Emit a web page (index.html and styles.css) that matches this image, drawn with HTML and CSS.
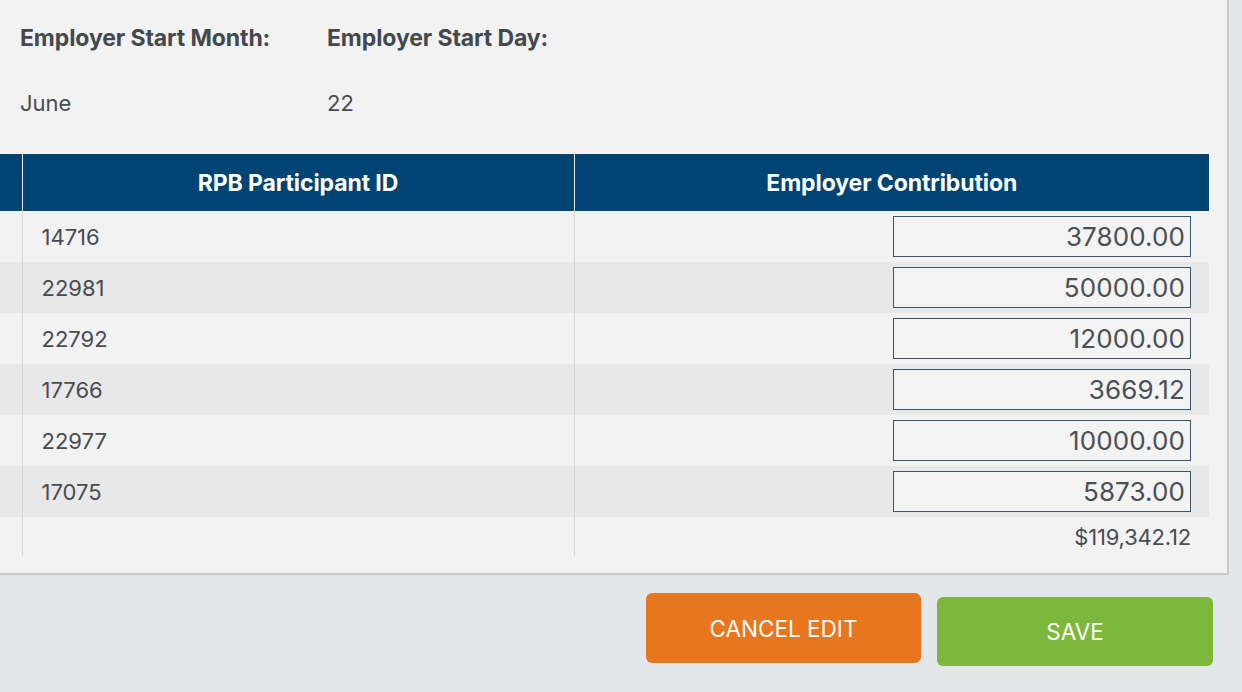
FILE: index.html
```html
<!DOCTYPE html>
<html>
<head>
<meta charset="utf-8">
<link rel="stylesheet" href="styles.css">
</head>
<body>
<div class="page">
  <div class="card">
    <div class="info">
      <div class="label">Employer Start Month:</div>
      <div class="label">Employer Start Day:</div>
      <div class="value">June</div>
      <div class="value">22</div>
    </div>
    <table class="grid">
      <colgroup>
        <col class="c0"><col class="c1"><col class="c2">
      </colgroup>
      <thead>
        <tr><th></th><th>RPB Participant ID</th><th>Employer Contribution</th></tr>
      </thead>
      <tbody>
        <tr><td></td><td class="id">14716</td><td class="amt"><input class="field" value="37800.00"></td></tr>
        <tr class="alt"><td></td><td class="id">22981</td><td class="amt"><input class="field" value="50000.00"></td></tr>
        <tr><td></td><td class="id">22792</td><td class="amt"><input class="field" value="12000.00"></td></tr>
        <tr class="alt"><td></td><td class="id">17766</td><td class="amt"><input class="field" value="3669.12"></td></tr>
        <tr><td></td><td class="id">22977</td><td class="amt"><input class="field" value="10000.00"></td></tr>
        <tr class="alt"><td></td><td class="id">17075</td><td class="amt"><input class="field" value="5873.00"></td></tr>
        <tr class="foot"><td></td><td></td><td class="total">$119,342.12</td></tr>
      </tbody>
    </table>
  </div>
  <div class="actions">
    <button class="btn cancel">CANCEL EDIT</button>
    <button class="btn save">SAVE</button>
  </div>
</div>
</body>
</html>
```
FILE: styles.css
```css
html, body {
  margin: 0;
  padding: 0;
  background: #e3e7ea;
  font-family: Inter, Lato, sans-serif;
  color: #474c52;
}
.page {
  width: 1242px;
  height: 692px;
  overflow: hidden;
}
.card {
  width: 1209px;
  background: #f2f2f2;
  padding: 26px 18px 17px 0;
  border-right: 2px solid #c9c9c9;
  border-bottom: 2px solid #cacaca;
  box-sizing: content-box;
}
.info {
  display: grid;
  grid-template-columns: 307px auto;
  row-gap: 41px;
  padding-left: 20px;
}
.label {
  font-weight: 700;
  font-size: 23px;
  line-height: 24px;
  letter-spacing: -0.1px;
  color: #43484e;
}
.value {
  font-size: 22px;
  line-height: 24px;
  letter-spacing: 0;
}
.grid {
  margin-top: 38px;
  width: 1209px;
  border-collapse: collapse;
  table-layout: fixed;
}
.c0 { width: 22px; }
.c1 { width: 552px; }
.c2 { width: 635px; }
.grid th {
  background: #004474;
  color: #fff;
  font-weight: 700;
  font-size: 23px;
  letter-spacing: -0.1px;
  height: 57px;
  padding: 0;
  border-left: 1px solid #e6ebf0;
  border-top: 1px solid #fafafa;
  text-align: center;
}
.grid th:first-child { border-left: none; }
.grid td {
  height: 51px;
  padding: 0;
  border-left: 1px solid #d6d6d6;
  font-size: 22px;
  letter-spacing: 0;
}
.grid td:first-child { border-left: none; }
.grid tr.alt td { background: #e8e8e8; }
.grid td.id { padding-left: 19px; }
.grid td.amt {
  text-align: right;
  padding-right: 18px;
}
.field {
  width: 298px;
  height: 41px;
  box-sizing: border-box;
  border: 1.5px solid #3a5470;
  background: #f3f3f3;
  font-family: Inter, Lato, sans-serif;
  font-size: 26px;
  letter-spacing: 0.1px;
  color: #4a4f55;
  text-align: right;
  padding: 0 5px 0 0;
  margin: 0;
  vertical-align: middle;
  outline: none;
}
.grid tr.foot td { height: 39px; }
.grid td.total {
  text-align: right;
  padding-right: 18px;
  font-size: 22px;
  letter-spacing: -0.2px;
}
.actions {
  display: flex;
  justify-content: flex-end;
  align-items: flex-start;
  gap: 16px;
  padding: 18px 29px 0 0;
}
.btn {
  border: none;
  border-radius: 6px;
  color: #fff;
  font-family: Inter, Lato, sans-serif;
  font-size: 22.5px;
  font-weight: 400;
  height: 70px;
  padding: 0;
  cursor: pointer;
}
.cancel {
  width: 275px;
  background: #e8761e;
  height: 70px;
}
.save {
  width: 276px;
  background: #7cb83c;
  margin-top: 4px;
  height: 69px;
}
```
